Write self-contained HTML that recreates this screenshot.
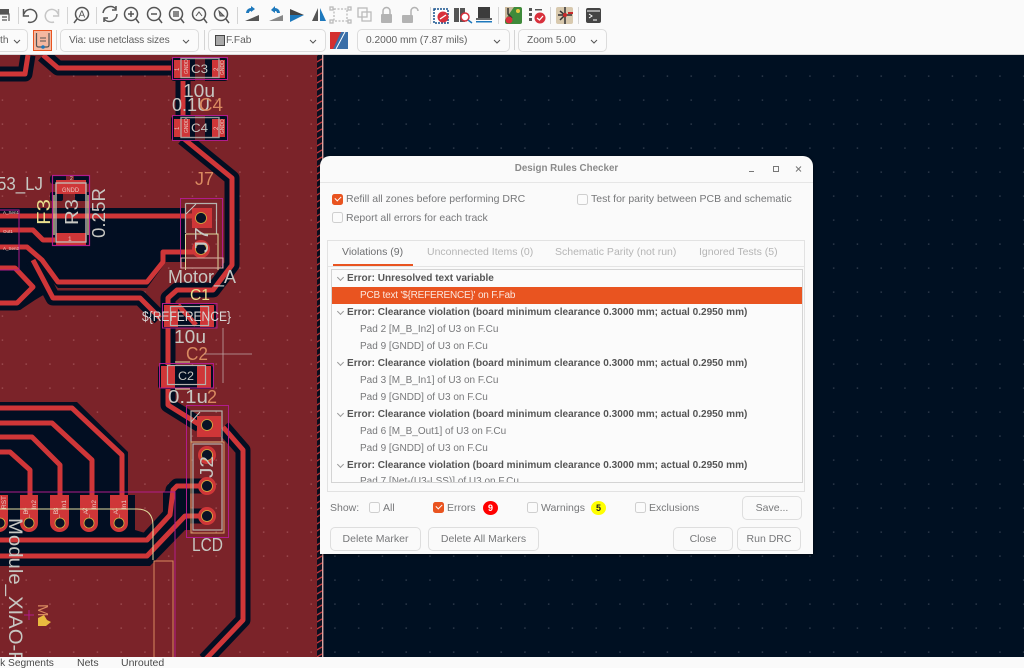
<!DOCTYPE html>
<html><head><meta charset="utf-8"><style>
html,body{margin:0;padding:0;background:#fff}
#r{position:relative;width:1024px;height:668px;overflow:hidden;font-family:"Liberation Sans",sans-serif;background:#fafafa}
.a{position:absolute}
.cb{position:absolute;box-sizing:border-box;height:23px;border:1px solid #dcdcdc;border-radius:5px;background:#fbfbfb;font-size:10.2px;line-height:22px;color:#5f5f5f;white-space:nowrap}
.cb span{position:absolute;left:8px;top:0}
.cb svg{position:absolute;right:8px;top:9px}
.sep{position:absolute;width:1px;background:#d4d4d4}
#d{position:absolute;left:320px;top:156px;width:493px;height:398px;background:#fafafa;border-radius:10px 10px 0 0;color:#77787a;font-size:10.5px;box-shadow:0 1px 3px rgba(0,0,0,.5)}
#d .t{position:absolute;white-space:nowrap;line-height:14px}
.ck{position:absolute;box-sizing:border-box;width:11px;height:11px;border:1px solid #cfcfcf;border-radius:2.5px;background:#fbfbfb}
.ck.on{background:#e95420;border-color:#e95420}
.ck.on:after{content:"";position:absolute;left:2px;top:1px;width:5px;height:3px;border-left:1.4px solid #fff;border-bottom:1.4px solid #fff;transform:rotate(-45deg)}
.btn{position:absolute;box-sizing:border-box;height:24px;border:1px solid #dedede;border-radius:5px;background:#fafafa;font-size:10.5px;line-height:22px;text-align:center;color:#77787a}
.row{position:absolute;left:0;width:471px;height:17px;line-height:17px;white-space:nowrap;font-size:10px;color:#77787a}
.row.b{font-weight:bold;color:#555;padding-left:15px;width:456px;font-size:10.05px}
.row.i{padding-left:28px;width:443px}
.row.b:before{content:"";position:absolute;left:6px;top:5px;width:4px;height:4px;border-right:1px solid #999;border-bottom:1px solid #999;transform:rotate(45deg)}
</style></head><body><div id="r">

<!-- canvas -->
<svg class="a" style="left:0;top:55px" width="1024" height="613" viewBox="0 55 1024 613" font-family="Liberation Sans,sans-serif">
<defs>
<pattern id="g" patternUnits="userSpaceOnUse" width="23.75" height="24" x="14.5" y="64"><rect x="11" y="11.5" width="1.4" height="1.2" fill="#3b4656"/></pattern>
<pattern id="g2" patternUnits="userSpaceOnUse" width="23.75" height="24" x="14.5" y="64"><rect x="11" y="11.5" width="1.4" height="1.2" fill="#a5565a"/></pattern>
<pattern id="h" patternUnits="userSpaceOnUse" width="7" height="7"><rect width="7" height="7" fill="#0a1020"/><path d="M0 7L7 3" stroke="#c43438" stroke-width="1.4"/></pattern>
</defs>
<rect x="0" y="55" width="1024" height="613" fill="#001022"/>
<rect x="0" y="55" width="1024" height="613" fill="url(#g)"/>
<rect x="0" y="55" width="317" height="613" fill="#7b2329"/>
<rect x="0" y="55" width="317" height="613" fill="url(#g2)"/>
<rect x="317" y="55" width="5" height="613" fill="url(#h)"/>
<rect x="322" y="55" width="1.4" height="613" fill="#d9a3a0"/>

<!-- filled clearance regions -->
<g fill="#020e22">
<path d="M0 208H186V262H166L147 288H58L40 268H0Z"/>
<path d="M0 245H30L42 262L55 288L35 300L20 310H0Z"/>
<path d="M0 402H77L128 452V495H135V530L145 533L163 515V493L175 480H190V530H185L150 566H0Z"/>
</g>
<g fill="none" stroke="#020e22" stroke-width="15" stroke-linejoin="round">
<path d="M43 55L58 68H172"/><path d="M0 74H25L28 55"/>
<path d="M183 80V115"/><path d="M183 138L232 178V265L213 290H177L168 298V405L200 425"/>
<path d="M223 427L243 450V620L205 660"/>
<path d="M33 260L53 298H140L160 318"/>
<path d="M0 303H17L33 287L15 268H0"/>
<path d="M0 540H147L170 515L173 490L177 486H207"/>
<path d="M0 556H147L185 516H207"/>
</g>
<!-- R3 clearance notches -->
<rect x="50" y="175" width="40" height="9" rx="3" fill="#020e22"/>
<rect x="50" y="192" width="13" height="9" rx="2" fill="#020e22"/><rect x="75" y="192" width="15" height="9" rx="2" fill="#020e22"/>
<rect x="66" y="172" width="8" height="30" fill="#7b2329"/>
<!-- tracks -->
<g fill="none" stroke="#cf3638" stroke-width="5" stroke-linejoin="round">
<path d="M43 55L58 68H172"/><path d="M0 74H25L28 55"/>
<path d="M183 80V115"/><path d="M183 138L232 178V265L213 290H177L168 298V405L200 425"/>
<path d="M223 427L243 450V620L205 660"/>
<path d="M0 216H200"/>
<path d="M0 230H33L43 240H55"/>
<path d="M0 247H27L42 260L58 282H147L163 262V252H198"/>
<path d="M33 260L53 298H140L160 318"/>
<path d="M0 303H17L33 287L15 268H0"/>
<path d="M0 408H72L122 455V495"/>
<path d="M0 423H52L92 460V495"/>
<path d="M0 437H32L60 465V495"/>
<path d="M0 452H10L30 470V495"/>
<path d="M0 540H147L170 515L173 490L177 486H207"/>
<path d="M0 556H147L185 516H207"/>
</g>
<!-- U3 pads -->
<g fill="#cf3638">
<path d="M-10 495H8V523A9 9 0 0 1 -10 523Z"/>
<path d="M20 495H38V523A9 9 0 0 1 20 523Z"/>
<path d="M50 495H69V523A9.5 9 0 0 1 50 523Z"/>
<path d="M80 495H98V523A9 9 0 0 1 80 523Z"/>
<path d="M110 495H128V523A9 9 0 0 1 110 523Z"/>
</g>
<g fill="#0a1226" stroke="#d8b040" stroke-width=".8"><circle cx="0" cy="523" r="5"/><circle cx="29" cy="523" r="5"/><circle cx="60" cy="523" r="5"/><circle cx="89" cy="523" r="5"/><circle cx="119" cy="523" r="5"/></g>
<g fill="#e8c8c0" font-size="6.5">
<text transform="translate(36,509) rotate(-90)">In2</text><text transform="translate(27,511) rotate(-90)" font-size="6">4</text><text transform="translate(28,518) rotate(-90)">_B</text>
<text transform="translate(66,509) rotate(-90)">In1</text><text transform="translate(58,511) rotate(-90)" font-size="6">3</text><text transform="translate(58,518) rotate(-90)">_B</text>
<text transform="translate(96,509) rotate(-90)">In2</text><text transform="translate(87,511) rotate(-90)" font-size="6">2</text><text transform="translate(88,518) rotate(-90)">_A</text>
<text transform="translate(126,509) rotate(-90)">In1</text><text transform="translate(117,511) rotate(-90)" font-size="6">1</text><text transform="translate(118,518) rotate(-90)">_A</text>
<text transform="translate(6,509) rotate(-90)">RST</text>
</g>
<!-- U3 outlines -->
<path d="M0 492H175V657" fill="none" stroke="#b01c8c" stroke-width="1"/>
<path d="M0 509H137Q153 509 153 526V560" fill="none" stroke="#e2dc9e" stroke-width="1"/>
<path d="M154 657V561H173V657" fill="none" stroke="#d98a60" stroke-width="1"/>

<!-- C3 / C4 -->
<g>
<rect x="171" y="58" width="57" height="23" fill="#020e22" rx="3"/>
<rect x="174" y="60" width="16" height="18" fill="#cf3638"/><rect x="212" y="60" width="13" height="18" fill="#cf3638"/>
<rect x="195" y="57" width="10" height="24" fill="#7b2329" opacity=".8"/>
<rect x="172.5" y="57.5" width="55" height="22" fill="none" stroke="#b01c8c"/><rect x="181" y="58.5" width="38" height="19" fill="none" stroke="#b5b3ae" stroke-width="1.4" opacity=".85"/>
<g font-size="6" fill="#e8c8c0"><text transform="translate(179,71) rotate(-90)">1</text><text transform="translate(218,71) rotate(-90)">2</text><text transform="translate(188,74) rotate(-90)" font-size="5">GNDD</text><text transform="translate(224,75) rotate(-90)" font-size="5">GNDD</text></g>
<text x="191" y="73" font-size="12" fill="#c7c7c2" textLength="17" lengthAdjust="spacingAndGlyphs">C3</text>
<text x="183" y="97" font-size="18" fill="#c7c7c2" textLength="32" lengthAdjust="spacingAndGlyphs">10u</text>
<text x="172" y="111" font-size="18" fill="#c7c7c2" textLength="38" lengthAdjust="spacingAndGlyphs">0.1U</text>
<text x="199" y="111" font-size="18" fill="#d98a60" textLength="24" lengthAdjust="spacingAndGlyphs">C4</text>
<rect x="171" y="116" width="57" height="25" fill="#020e22" rx="3"/>
<rect x="174" y="119" width="16" height="18" fill="#cf3638"/><rect x="212" y="119" width="13" height="18" fill="#cf3638"/>
<rect x="195" y="116" width="10" height="24" fill="#7b2329" opacity=".8"/>
<rect x="172.5" y="115.5" width="55" height="25" fill="none" stroke="#b01c8c"/><rect x="181" y="117.5" width="38" height="20" fill="none" stroke="#b5b3ae" stroke-width="1.4" opacity=".85"/>
<g font-size="6" fill="#e8c8c0"><text transform="translate(179,130) rotate(-90)">1</text><text transform="translate(218,130) rotate(-90)">2</text><text transform="translate(188,133) rotate(-90)" font-size="5">GNDD</text><text transform="translate(224,134) rotate(-90)" font-size="5">GNDD</text></g>
<text x="191" y="132" font-size="12" fill="#c7c7c2" textLength="17" lengthAdjust="spacingAndGlyphs">C4</text>
</g>
<!-- R3 -->
<rect x="56" y="180" width="30" height="14" fill="#cf3638"/><rect x="56" y="233" width="30" height="13" fill="#cf3638"/>
<rect x="52.5" y="175.5" width="37" height="70" fill="none" stroke="#b01c8c" stroke-width="1.2"/>
<rect x="56" y="183" width="30" height="59" fill="none" stroke="#c3c0ba" stroke-width="1.3"/>
<path d="M54 195V235M88 195V235" stroke="#e2dc9e" stroke-width="1.2"/>
<text x="62" y="192" font-size="6.5" fill="#e8c8c0" textLength="17" lengthAdjust="spacingAndGlyphs">GNDD</text><text x="68" y="241" font-size="6.5" fill="#e8c8c0">1</text><text x="70" y="180" font-size="5" fill="#e8c8c0">2</text>
<text transform="translate(78,225) rotate(-90)" font-size="18" fill="#c7c7c2" textLength="26" lengthAdjust="spacingAndGlyphs">R3</text>
<text transform="translate(50,225) rotate(-90)" font-size="18" fill="#e9df8e" textLength="26" lengthAdjust="spacingAndGlyphs">F3</text>
<text transform="translate(105,238) rotate(-90)" font-size="18" fill="#c7c7c2" textLength="50" lengthAdjust="spacingAndGlyphs">0.25R</text>
<text x="-3" y="190" font-size="18" fill="#c7c7c2" textLength="46" lengthAdjust="spacingAndGlyphs">53_LJ</text>
<rect x="-10" y="210" width="29" height="60" fill="none" stroke="#b01c8c"/>
<g fill="#e8c8c0" font-size="4.5"><text x="3" y="214">A_Sen1</text><text x="3" y="233">Out1</text><text x="3" y="250">A_Sen2</text></g>
<!-- J7 -->
<text x="195" y="185" font-size="18" fill="#d98a60" textLength="19" lengthAdjust="spacingAndGlyphs">J7</text>
<rect x="192" y="208" width="20" height="20" fill="#cf3638"/><circle cx="201" cy="218" r="5.5" fill="#0a1226" stroke="#d8b040" stroke-width=".8"/>
<circle cx="201" cy="249" r="9" fill="#cf3638"/><circle cx="201" cy="249" r="5.5" fill="#0a1226" stroke="#d8b040" stroke-width=".8"/>
<path d="M180.5 198.5H222.5V268H180.5Z" fill="none" stroke="#b01c8c"/>
<path d="M185.5 203.5H216.5V234M185.5 203.5V233" fill="none" stroke="#b5b3ae" stroke-width="1.2"/>
<path d="M186 214L196 204" stroke="#c7c7c2" stroke-width="1"/>
<path d="M185.5 234H218V270M185.5 234V270" fill="none" stroke="#e2dc9e" stroke-width="1"/>
<text transform="translate(208,253) rotate(-90)" font-size="18" fill="#c7c7c2" textLength="26" lengthAdjust="spacingAndGlyphs">J7</text>
<rect x="181" y="258" width="42" height="10" fill="none" stroke="#d9b0a6"/>
<text x="168" y="283" font-size="18" fill="#c7c7c2" textLength="68" lengthAdjust="spacingAndGlyphs">Motor_A</text>
<!-- C1 -->
<text x="190" y="300" font-size="16" fill="#e9df8e" textLength="20" lengthAdjust="spacingAndGlyphs">C1</text>
<rect x="162" y="304" width="54" height="24" fill="#020e22" rx="3"/><rect x="164" y="305" width="14" height="22" fill="#cf3638"/><rect x="200" y="305" width="14" height="22" fill="#cf3638"/>
<path d="M178 305L196 325" stroke="#cf3638" stroke-width="5"/>
<rect x="162.5" y="303.5" width="54.5" height="24.5" fill="none" stroke="#b01c8c"/>
<rect x="170.5" y="306.5" width="38" height="19" fill="none" stroke="#b5b3ae" stroke-width="1.2"/>
<text x="142" y="321" font-size="14" fill="#d8d8d6" textLength="89" lengthAdjust="spacingAndGlyphs">${REFERENCE}</text>
<text x="174" y="343" font-size="18" fill="#c7c7c2" textLength="32" lengthAdjust="spacingAndGlyphs">10u</text>
<text x="186" y="360" font-size="18" fill="#d98a60" textLength="22" lengthAdjust="spacingAndGlyphs">C2</text>
<path d="M204 354H252M223 328V383" stroke="#bfa5a5" stroke-width=".8"/>
<!-- C2 -->
<rect x="158" y="365" width="55" height="24" fill="#020e22" rx="3"/><rect x="161" y="366" width="14" height="22" fill="#cf3638"/><rect x="197" y="366" width="14" height="22" fill="#cf3638"/>
<rect x="159.5" y="363.5" width="54" height="24.5" fill="none" stroke="#b01c8c"/>
<rect x="167.5" y="365.5" width="38" height="19" fill="none" stroke="#b5b3ae" stroke-width="1.2"/>
<path d="M175 362H190M175 389H190" stroke="#e2dc9e" stroke-width="1"/>
<text x="178" y="380" font-size="12" fill="#c7c7c2" textLength="16" lengthAdjust="spacingAndGlyphs">C2</text>
<text x="168" y="403" font-size="18" fill="#c7c7c2" textLength="40" lengthAdjust="spacingAndGlyphs">0.1u</text><text x="207" y="403" font-size="18" fill="#d98a60">2</text>
<!-- J2 -->
<rect x="197" y="416" width="24" height="21" fill="#cf3638"/>
<circle cx="207" cy="455" r="9" fill="#cf3638"/><circle cx="207" cy="486" r="9" fill="#cf3638"/><circle cx="207" cy="516" r="9" fill="#cf3638"/>
<g fill="#0a1226" stroke="#d8b040" stroke-width=".8"><circle cx="207" cy="425" r="5.5"/><circle cx="207" cy="455" r="5.5"/><circle cx="207" cy="486" r="5.5"/><circle cx="207" cy="516" r="5.5"/></g>
<rect x="186.5" y="405.5" width="42" height="132" fill="none" stroke="#b01c8c"/>
<rect x="191" y="411" width="31" height="31" fill="none" stroke="#b5b3ae" stroke-width="1.2"/>
<path d="M191 422L200 412" stroke="#c7c7c2"/>
<rect x="191" y="442" width="33" height="91" fill="none" stroke="#d9a06a"/>
<rect x="193" y="444" width="29" height="86" fill="none" stroke="#b5b3ae" stroke-width="1.2"/>
<text transform="translate(213,478) rotate(-90)" font-size="18" fill="#c7c7c2" textLength="22" lengthAdjust="spacingAndGlyphs">J2</text>
<text x="192" y="551" font-size="18" fill="#c7c7c2" textLength="31" lengthAdjust="spacingAndGlyphs">LCD</text>
<!-- module text & mark -->
<text transform="translate(9,518) rotate(90)" font-size="19" fill="#c7c7c2" textLength="148" lengthAdjust="spacingAndGlyphs">Module_XIAO-R</text>
<path d="M24 615H34M29 610V620" stroke="#b01c8c" stroke-width="1"/>
<text transform="translate(38,604) rotate(90)" font-size="15" fill="#d98a60">M</text>
<path d="M38 618L44 615L47 620L51 622L46 626H38Z" fill="#e9bb3f"/>
</svg>

<!-- toolbar -->
<div class="a" style="left:0;top:0;width:1024px;height:55px;background:#fafafa;border-bottom:1px solid #d9d9d9;box-sizing:border-box"></div>
<div class="sep" style="left:67px;top:7px;height:17px"></div><div class="sep" style="left:96px;top:7px;height:17px"></div><div class="sep" style="left:237px;top:7px;height:17px"></div><div class="sep" style="left:430px;top:7px;height:17px"></div><div class="sep" style="left:498px;top:7px;height:17px"></div><div class="sep" style="left:550px;top:7px;height:17px"></div><div class="sep" style="left:578px;top:7px;height:17px"></div><div class="sep" style="left:18px;top:7px;height:17px"></div>
<svg class="a" style="left:0;top:0" width="620" height="27" fill="none">
<rect x="0" y="9" width="9" height="5" fill="#555"/><path d="M0 14H9V21M2 17H7M2 20H7" stroke="#555" stroke-width="1.2"/>
<path d="M23.5 9V16H29M24 14A6.5 6.5 0 1 1 28 22" stroke="#555" stroke-width="1.5"/>
<path d="M58.5 9V16H53M58 14A6.5 6.5 0 1 0 54 22" stroke="#c6c6c6" stroke-width="1.5"/>
<g stroke="#555" stroke-width="1.5">
<circle cx="82" cy="14" r="6.5"/><path d="M77 19L74 23"/>
<path d="M103 13A7.5 7.5 0 0 1 116 9M117 14A7.5 7.5 0 0 1 104 19"/><path d="M116 6V10H112M104 22V18H108"/>
<circle cx="131" cy="14" r="6.5"/><path d="M136 19L139 23M128 14H134M131 11V17"/>
<circle cx="154" cy="14" r="6.5"/><path d="M159 19L162 23M151 14H157"/>
<circle cx="176" cy="14" r="6.5"/><path d="M181 19L184 23"/><rect x="173" y="11" width="6" height="6" fill="#888" stroke="none"/>
<circle cx="199" cy="14" r="6.5"/><path d="M204 19L207 23"/><path d="M196 16L199 12L202 16" stroke-width="1"/>
<circle cx="221" cy="14" r="6.5"/><path d="M226 19L229 23"/><path d="M219 11L224 16L220 16Z" fill="#888" stroke-width="1"/>
</g>
<text x="78.5" y="17.5" font-size="10" font-family="Liberation Sans,sans-serif" fill="#555">A</text>
<path d="M245 21L259 15V21Z" fill="#555"/><path d="M257 9L253 6V8A5 5 0 0 0 248 13H251A2 2 0 0 1 253 11V12Z" fill="#1d78bc" transform="translate(-2,0)"/>
<path d="M269 21L283 15V21Z" fill="#888"/><path d="M271 10L275 6V8A5 5 0 0 1 280 13H277A2 2 0 0 0 275 11V13Z" fill="#1d78bc"/>
<path d="M290 9L304 15L290 15Z" fill="#444"/><path d="M290 15L304 15L290 22Z" fill="#1d78bc"/>
<path d="M318 8V21H312Z" fill="#555"/><path d="M320 8V21H326Z" fill="#1d78bc"/>
<g stroke="#bbb" stroke-width="1.3"><rect x="334" y="9" width="13" height="12" stroke-dasharray="2 1.5"/><rect x="330" y="7" width="3" height="3"/><rect x="348" y="7" width="3" height="3"/><rect x="330" y="20" width="3" height="3"/><rect x="348" y="20" width="3" height="3"/>
<rect x="358" y="8" width="9" height="9"/><rect x="362" y="12" width="9" height="9"/></g>
<rect x="381" y="14" width="11" height="9" rx="1" fill="#b3b3b3"/><path d="M383 14V11A3.5 3.5 0 0 1 390 11V14" stroke="#b3b3b3" stroke-width="1.5"/>
<rect x="402" y="15" width="11" height="8" rx="1" fill="#b3b3b3"/><path d="M411 15V11A3.5 3.5 0 0 1 418 11" stroke="#b3b3b3" stroke-width="1.5"/>
<rect x="434" y="9" width="14" height="14" fill="#fff" stroke="#15508c" stroke-width="1.5" stroke-dasharray="2 1"/><circle cx="443" cy="17" r="5.5" fill="#d8303c"/><path d="M440 19L446 15" stroke="#fff" stroke-width="1.3"/>
<path d="M454 8H459V22H454ZM460 8H465V22H460Z" fill="#555"/><circle cx="465" cy="17" r="4" stroke="#d8303c" stroke-width="1.5" fill="#fff"/><path d="M468 20L472 23" stroke="#1d78bc" stroke-width="1.5"/>
<rect x="478" y="7" width="12" height="11" fill="#3c3c3c"/><rect x="476" y="18" width="16" height="2" fill="#666"/><rect x="476" y="21" width="16" height="1.5" fill="#1d78bc"/>
<rect x="505" y="7" width="17" height="17" rx="2" fill="#3f8a3a"/><path d="M505 7H514L505 20Z" fill="#c9b89b"/><path d="M508 8V14L512 18" stroke="#333" stroke-width="1.5"/><circle cx="509" cy="20" r="3.5" fill="#d8303c"/><circle cx="518" cy="11" r="2" fill="#e9c63f"/>
<g fill="#555"><rect x="529" y="8" width="3" height="3"/><rect x="529" y="13" width="3" height="3"/><rect x="529" y="18" width="3" height="3"/><rect x="535" y="9" width="7" height="1.5"/></g><circle cx="540" cy="18" r="5.5" fill="#d8303c"/><path d="M537 18L539.5 20L543 16" stroke="#fff" stroke-width="1.3"/>
<rect x="556" y="7" width="17" height="17" rx="2" fill="#d8c9ae"/><path d="M565 7V24M558 15H572M560 11L565 15L560 20" stroke="#333" stroke-width="1.5"/><circle cx="565" cy="15" r="2" fill="#c92a2a"/><path d="M568 13H573" stroke="#c92a2a" stroke-width="2"/>
<rect x="586" y="8" width="15" height="15" rx="2" fill="#444"/><path d="M589 14L592 16L589 18M593 20H597M587 11H600" stroke="#fff" stroke-width="1"/>
</g>
<div class="cb" style="left:-30px;top:29px;width:58px"><span style="left:29px">th</span><svg width="8" height="5" style="right:6px"><path d="M1 1L4 4L7 1" fill="none" stroke="#555"/></svg></div>
<div class="a" style="left:33px;top:30px;width:19px;height:21px;background:#f5b8a0;border:1px solid #e95420;box-sizing:border-box"></div>
<svg class="a" style="left:33px;top:30px" width="20" height="22" fill="none"><path d="M3.5 3V15Q3.5 17 5.5 17H14Q16 17 16 15V3" stroke="#555" stroke-width="1.2"/><path d="M7 8H13M7 11H13" stroke="#555"/><circle cx="10" cy="17" r="1.8" fill="#1d78bc"/></svg>
<div class="sep" style="left:56px;top:30px;height:20px"></div>
<div class="cb" style="left:60px;top:29px;width:139px"><span style="letter-spacing:-.1px">Via: use netclass sizes</span><svg width="8" height="5"><path d="M1 1L4 4L7 1" fill="none" stroke="#555"/></svg></div>
<div class="sep" style="left:204px;top:30px;height:20px"></div>
<div class="cb" style="left:208px;top:29px;width:118px"><span style="left:17px">F.Fab</span><svg width="8" height="5"><path d="M1 1L4 4L7 1" fill="none" stroke="#555"/></svg></div>
<div class="a" style="left:215px;top:35px;width:8px;height:9px;background:#a8a8a8;border:1px solid #444"></div>
<svg class="a" style="left:330px;top:32px" width="18" height="17"><rect width="18" height="17" fill="#3a6ea8"/><path d="M0 17V0H11L3 17Z" fill="#d32f2f"/><path d="M6 17L15 0" stroke="#fff" stroke-width="1"/></svg>
<div class="cb" style="left:357px;top:29px;width:153px"><span style="left:8px">0.2000 mm (7.87 mils)</span><svg width="8" height="5"><path d="M1 1L4 4L7 1" fill="none" stroke="#555"/></svg></div>
<div class="sep" style="left:514px;top:30px;height:20px"></div>
<div class="cb" style="left:518px;top:29px;width:89px"><span style="left:8px">Zoom 5.00</span><svg width="8" height="5"><path d="M1 1L4 4L7 1" fill="none" stroke="#555"/></svg></div>

<!-- status bar -->
<div class="a" style="left:0;top:657px;width:1024px;height:11px;background:#fafafa;font-size:10.5px;color:#4a4a4a;overflow:hidden">
<span class="a" style="left:-5px;top:0;line-height:13px;white-space:nowrap;font-size:10.2px">ck Segments</span><span class="a" style="left:77px;top:0;line-height:13px">Nets</span><span class="a" style="left:121px;top:0;line-height:13px">Unrouted</span></div>

<!-- dialog -->
<div id="d">
<div class="t" style="left:0;width:493px;text-align:center;top:6px;font-weight:bold;color:#8a8a8a;font-size:9.8px">Design Rules Checker</div>
<svg class="a" style="left:425px;top:6px" width="60" height="14" fill="none" stroke="#777"><path d="M4 9.5H9"/><rect x="28.5" y="4.5" width="5" height="5"/><path d="M51 4.5L56 9.5M56 4.5L51 9.5"/></svg>
<div class="a" style="left:0;top:26px;width:493px;height:1px;background:#e6e6e6"></div>

<div class="ck on" style="left:12px;top:38px"></div><div class="t" style="left:26px;top:36px">Refill all zones before performing DRC</div>
<div class="ck" style="left:257px;top:38px"></div><div class="t" style="left:271px;top:36px">Test for parity between PCB and schematic</div>
<div class="ck" style="left:12px;top:56px"></div><div class="t" style="left:26px;top:55px">Report all errors for each track</div>

<div class="a" style="left:7px;top:84px;width:478px;height:252px;border:1px solid #e2e2e2;box-sizing:border-box"></div>
<div class="t" style="left:22px;top:89px;color:#6e6f71">Violations (9)</div>
<div class="a" style="left:13px;top:108px;width:80px;height:2px;background:#e95420"></div>
<div class="t" style="left:107px;top:89px;color:#b5b5b5">Unconnected Items (0)</div>
<div class="t" style="left:235px;top:89px;color:#b5b5b5">Schematic Parity (not run)</div>
<div class="t" style="left:379px;top:89px;color:#b5b5b5">Ignored Tests (5)</div>
<div class="a" style="left:8px;top:110px;width:476px;height:1px;background:#e4e4e4"></div>

<div class="a" style="left:11px;top:113px;width:472px;height:214px;border:1px solid #d4d4d4;box-sizing:border-box;background:#fbfbfb;overflow:hidden">
<div class="row b" style="top:0">Error: Unresolved text variable</div>
<div class="row i" style="top:17px;background:#e95420;color:#fbe6dd;letter-spacing:-.2px">PCB text '${REFERENCE}' on F.Fab</div>
<div class="row b" style="top:34px">Error: Clearance violation (board minimum clearance 0.3000 mm; actual 0.2950 mm)</div>
<div class="row i" style="top:51px">Pad 2 [M_B_In2] of U3 on F.Cu</div>
<div class="row i" style="top:68px">Pad 9 [GNDD] of U3 on F.Cu</div>
<div class="row b" style="top:85px">Error: Clearance violation (board minimum clearance 0.3000 mm; actual 0.2950 mm)</div>
<div class="row i" style="top:102px">Pad 3 [M_B_In1] of U3 on F.Cu</div>
<div class="row i" style="top:119px">Pad 9 [GNDD] of U3 on F.Cu</div>
<div class="row b" style="top:136px">Error: Clearance violation (board minimum clearance 0.3000 mm; actual 0.2950 mm)</div>
<div class="row i" style="top:153px">Pad 6 [M_B_Out1] of U3 on F.Cu</div>
<div class="row i" style="top:170px">Pad 9 [GNDD] of U3 on F.Cu</div>
<div class="row b" style="top:187px">Error: Clearance violation (board minimum clearance 0.3000 mm; actual 0.2950 mm)</div>
<div class="row i" style="top:203px">Pad 7 [Net-(U3-LSS)] of U3 on F.Cu</div>
</div>

<div class="t" style="left:10px;top:345px">Show:</div>
<div class="ck" style="left:49px;top:346px"></div><div class="t" style="left:63px;top:345px">All</div>
<div class="ck on" style="left:113px;top:346px"></div><div class="t" style="left:127px;top:345px">Errors</div>
<div class="a" style="left:163px;top:345px;width:15px;height:14px;border-radius:50%;background:#f00;color:#fff;font-size:9px;font-weight:bold;text-align:center;line-height:14px">9</div>
<div class="ck" style="left:207px;top:346px"></div><div class="t" style="left:221px;top:345px">Warnings</div>
<div class="a" style="left:271px;top:345px;width:15px;height:14px;border-radius:50%;background:#ff0;color:#222;font-size:9px;font-weight:bold;text-align:center;line-height:14px">5</div>
<div class="ck" style="left:315px;top:346px"></div><div class="t" style="left:329px;top:345px">Exclusions</div>
<div class="btn" style="left:422px;top:340px;width:60px">Save...</div>
<div class="btn" style="left:10px;top:371px;width:91px">Delete Marker</div>
<div class="btn" style="left:108px;top:371px;width:111px">Delete All Markers</div>
<div class="btn" style="left:353px;top:371px;width:60px">Close</div>
<div class="btn" style="left:417px;top:371px;width:64px">Run DRC</div>
</div>
</div></body></html>
